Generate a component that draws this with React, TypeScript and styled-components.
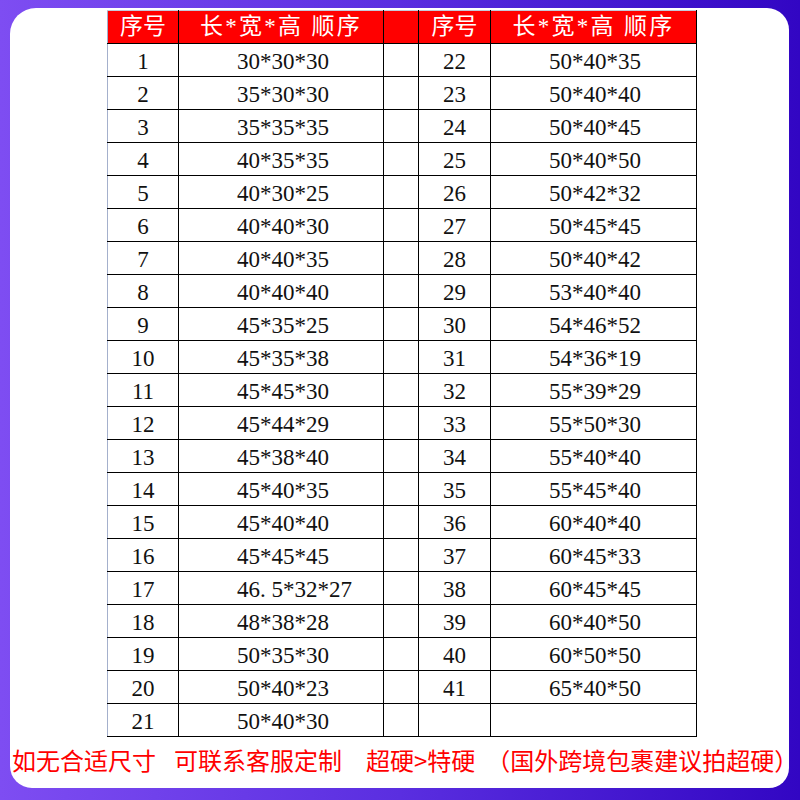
import React from "react";
import styled, { createGlobalStyle } from "styled-components";

const GlobalStyle = createGlobalStyle`
  html, body {
    margin: 0;
    padding: 0;
  }
  body {
    width: 800px;
    height: 800px;
    overflow: hidden;
  }
`;

const Page = styled.div`
  width: 800px;
  height: 800px;
  box-sizing: border-box;
  padding: 8px 11px 12px 10px;
  background: linear-gradient(90deg, #7e4df2 0%, #5a2ee0 50%, #3206c3 100%);
`;

const Card = styled.div`
  height: 100%;
  background: #fff;
  border-radius: 26px 22px 20px 22px;
  display: flex;
  flex-direction: column;
  padding-top: 2px;
  box-sizing: border-box;
`;

const Table = styled.table`
  margin-left: 97px;
  width: 589px;
  border-collapse: collapse;
  table-layout: fixed;
  font-family: "Liberation Serif", "Noto Sans CJK SC", serif;
  font-size: 23px;
  color: #111;
`;

const HeadCell = styled.th<{ $wide?: boolean }>`
  height: 32px;
  padding: 0;
  background: #ff0000;
  color: #fff;
  font-family: "Liberation Serif", "Noto Sans CJK SC", serif;
  font-weight: 400;
  font-size: 23px;
  line-height: 32px;
  text-align: center;
  white-space: pre;
  letter-spacing: ${(p) => (p.$wide ? "2.3px" : "0")};
  border: 1px solid #000;
  border-top-color: #c4cad8;
  &:first-child {
    border-left-color: #a4b0cc;
  }
`;

const Cell = styled.td<{ $size?: boolean }>`
  height: 32px;
  padding: 3px 0 0 ${(p) => (p.$size ? "58px" : "0")};
  box-sizing: border-box;
  line-height: 29px;
  text-align: ${(p) => (p.$size ? "left" : "center")};
  white-space: nowrap;
  border: 1px solid #000;
  &:first-child {
    border-left-color: #a4b0cc;
  }
`;

const Footer = styled.div`
  margin-top: 8px;
  padding-left: 2px;
  display: flex;
  font-family: "Noto Sans CJK SC", sans-serif;
  font-size: 24px;
  line-height: 30px;
  color: #ff0000;
  white-space: nowrap;
`;

const Phrase = styled.span<{ $gap: number }>`
  margin-left: ${(p) => p.$gap}px;
`;

const left: [number, string][] = [
  [1, "30*30*30"],
  [2, "35*30*30"],
  [3, "35*35*35"],
  [4, "40*35*35"],
  [5, "40*30*25"],
  [6, "40*40*30"],
  [7, "40*40*35"],
  [8, "40*40*40"],
  [9, "45*35*25"],
  [10, "45*35*38"],
  [11, "45*45*30"],
  [12, "45*44*29"],
  [13, "45*38*40"],
  [14, "45*40*35"],
  [15, "45*40*40"],
  [16, "45*45*45"],
  [17, "46. 5*32*27"],
  [18, "48*38*28"],
  [19, "50*35*30"],
  [20, "50*40*23"],
  [21, "50*40*30"],
];

const right: [number, string][] = [
  [22, "50*40*35"],
  [23, "50*40*40"],
  [24, "50*40*45"],
  [25, "50*40*50"],
  [26, "50*42*32"],
  [27, "50*45*45"],
  [28, "50*40*42"],
  [29, "53*40*40"],
  [30, "54*46*52"],
  [31, "54*36*19"],
  [32, "55*39*29"],
  [33, "55*50*30"],
  [34, "55*40*40"],
  [35, "55*45*40"],
  [36, "60*40*40"],
  [37, "60*45*33"],
  [38, "60*45*45"],
  [39, "60*40*50"],
  [40, "60*50*50"],
  [41, "65*40*50"],
];

export default function App() {
  return (
    <>
      <GlobalStyle />
      <Page>
        <Card>
          <Table>
            <colgroup>
              <col style={{ width: 71 }} />
              <col style={{ width: 205 }} />
              <col style={{ width: 35 }} />
              <col style={{ width: 72 }} />
              <col style={{ width: 206 }} />
            </colgroup>
            <thead>
              <tr>
                <HeadCell>序号</HeadCell>
                <HeadCell $wide>长*宽*高 顺序</HeadCell>
                <HeadCell />
                <HeadCell>序号</HeadCell>
                <HeadCell $wide>长*宽*高 顺序</HeadCell>
              </tr>
            </thead>
            <tbody>
              {left.map(([n, size], i) => (
                <tr key={n}>
                  <Cell>{n}</Cell>
                  <Cell $size>{size}</Cell>
                  <Cell />
                  <Cell>{right[i] ? right[i][0] : ""}</Cell>
                  <Cell $size>{right[i] ? right[i][1] : ""}</Cell>
                </tr>
              ))}
            </tbody>
          </Table>
          <Footer>
            <Phrase $gap={0}>如无合适尺寸</Phrase>
            <Phrase $gap={18}>可联系客服定制</Phrase>
            <Phrase $gap={24}>超硬&gt;特硬</Phrase>
            <Phrase $gap={11}>（国外跨境包裹建议拍超硬）</Phrase>
          </Footer>
        </Card>
      </Page>
    </>
  );
}
